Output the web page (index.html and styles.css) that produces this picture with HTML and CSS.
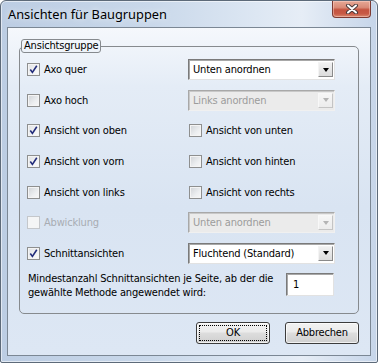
FILE: index.html
```html
<!DOCTYPE html>
<html>
<head>
<meta charset="utf-8">
<link rel="stylesheet" href="styles.css">
</head>
<body>

<div class="window">
    <div class="titlebar">
        <span class="title">Ansichten für Baugruppen</span>
        <div class="close">
            <svg width="14" height="10" viewBox="0 0 14 10">
                <path d="M3 1.5 L11 8.5 M11 1.5 L3 8.5" stroke="#4a3a3a" stroke-width="4" stroke-linecap="round"/>
                <path d="M3 1.5 L11 8.5 M11 1.5 L3 8.5" stroke="#ffffff" stroke-width="2" stroke-linecap="round"/>
            </svg>
        </div>
    </div>

    <div class="client">
        <fieldset class="group">
            <legend>Ansichtsgruppe</legend>

            <div class="grid">
                <div class="check"><span class="box on"></span>Axo quer</div>
                <div class="combo"><span class="value">Unten anordnen</span><span class="arrow"></span></div>

                <div class="check"><span class="box"></span>Axo hoch</div>
                <div class="combo disabled"><span class="value">Links anordnen</span><span class="arrow"></span></div>

                <div class="check"><span class="box on"></span>Ansicht von oben</div>
                <div class="check right"><span class="box"></span>Ansicht von unten</div>

                <div class="check"><span class="box on"></span>Ansicht von vorn</div>
                <div class="check right"><span class="box"></span>Ansicht von hinten</div>

                <div class="check"><span class="box"></span>Ansicht von links</div>
                <div class="check right"><span class="box"></span>Ansicht von rechts</div>

                <div class="check disabled"><span class="box"></span>Abwicklung</div>
                <div class="combo disabled"><span class="value">Unten anordnen</span><span class="arrow"></span></div>

                <div class="check"><span class="box on"></span>Schnittansichten</div>
                <div class="combo"><span class="value">Fluchtend (Standard)</span><span class="arrow"></span></div>
            </div>

            <div class="minrow">
                <p>Mindestanzahl Schnittansichten je Seite, ab der die<br>gewählte Methode angewendet wird:</p>
                <div class="field">1</div>
            </div>
        </fieldset>

        <div class="buttons">
            <div class="btn default"><span>OK</span></div>
            <div class="btn"><span>Abbrechen</span></div>
        </div>
    </div>
</div>

</body>
</html>
```

FILE: styles.css
```css
body {
    margin: 0;
    padding: 0;
    background: #ffffff;
}

.window {
    width: 378px;
    height: 363px;
    box-sizing: border-box;
    border: 1px solid #5d6a79;
    border-radius: 6px 6px 2px 2px;
    background: linear-gradient(to right, #bccde3 0%, #c9d8ea 40%, #dde7f3 68%, #e6edf6 80%, #c6d5e9 100%);
    box-shadow: inset 0 0 0 1px rgba(255, 255, 255, 0.55);
    display: flex;
    flex-direction: column;
    font-family: "DejaVu Sans Condensed", "DejaVu Sans", sans-serif;
    font-size: 11px;
    letter-spacing: -0.18px;
    color: #000000;
}

.titlebar {
    height: 25px;
    display: flex;
    align-items: center;
}

.title {
    padding-left: 7px;
    font-family: "Noto Sans", "Open Sans", sans-serif;
    font-size: 12.8px;
    letter-spacing: 0;
    color: #000000;
    text-shadow: 0 0 6px rgba(255, 255, 255, 0.9);
}

.close {
    margin-left: auto;
    margin-right: 6px;
    align-self: flex-start;
    width: 39px;
    height: 17px;
    box-sizing: border-box;
    border: 1px solid #7d3a32;
    border-top: none;
    border-radius: 0 0 4px 4px;
    background: linear-gradient(#e6a896 0%, #d98b78 40%, #c4533f 55%, #c85a45 80%, #d98a70 100%);
    box-shadow: inset 0 0 0 1px rgba(255, 220, 210, 0.45);
    display: flex;
    align-items: center;
    justify-content: center;
}

.client {
    margin: 1px 6px 0 6px;
    height: 329px;
    box-sizing: border-box;
    border: 1px solid #7b8794;
    background: linear-gradient(#f5f8fc 0%, #e4ecf6 18%, #d9e4f2 55%, #dde7f4 100%);
    display: flex;
    flex-direction: column;
}

.group {
    margin: 11px 11px 0 11px;
    padding: 6px 24px 13px 7px;
    border: 1px solid #868a8e;
    border-radius: 5px;
    min-width: 0;
}

.group legend {
    margin-left: -6px;
    padding: 0 2px 0 2px;
    height: 14px;
    box-sizing: border-box;
    line-height: 12px;
    border: 1px solid #868a8e;
    border-radius: 3px;
}

.grid {
    display: grid;
    grid-template-columns: 161px 147px;
    grid-auto-rows: 21px;
    row-gap: 9.67px;
}

.check {
    display: flex;
    align-items: center;
    white-space: nowrap;
}

.check.right {
    padding-left: 1px;
}

.check.disabled {
    color: #a8acb2;
}

.box {
    width: 13px;
    height: 13px;
    box-sizing: border-box;
    margin-right: 4px;
    border: 1px solid #8e8f8f;
    background: linear-gradient(135deg, #cfd2d6 0%, #eceef0 60%, #f8f8f8 100%);
    box-shadow: inset 0 0 0 1px #f4f4f4;
    flex: none;
}

.box.on {
    background-color: #f4f4f4;
    background-image: url("data:image/svg+xml,%3Csvg xmlns='http://www.w3.org/2000/svg' width='11' height='11'%3E%3Cpath d='M2.3 5.6 L4.4 8.4 L8.8 1.8' fill='none' stroke='%23222c7a' stroke-width='1.6'/%3E%3C/svg%3E"), linear-gradient(135deg, #dfe1e4 0%, #f2f3f4 60%, #fbfbfb 100%);
    background-repeat: no-repeat;
    background-position: center, 0 0;
}

.check.disabled .box {
    border-color: #c4c7cb;
    background: #f4f5f6;
    box-shadow: none;
}

.combo {
    position: relative;
    display: flex;
    align-items: center;
    box-sizing: border-box;
    height: 21px;
    border: 1px solid;
    border-color: #7a7a7a #e2e2e2 #e2e2e2 #7a7a7a;
    box-shadow: inset 1px 1px 0 #a8a8a8;
    background: #ffffff;
}

.combo .value {
    padding-left: 4px;
    flex: 1;
}

.combo .arrow {
    width: 15px;
    height: 15px;
    margin-right: 1px;
    box-sizing: border-box;
    border: 1px solid;
    border-color: #f4f4f4 #8a8a8a #8a8a8a #f4f4f4;
    background: linear-gradient(#f1f1f1, #dcdcdc);
    display: flex;
    align-items: center;
    justify-content: center;
}

.combo .arrow::after {
    content: "";
    border-left: 3.5px solid transparent;
    border-right: 3.5px solid transparent;
    border-top: 4px solid #000000;
}

.combo.disabled {
    background: #ebebeb;
    color: #9c9c9c;
    border-color: #a8a8a8 #f0f0f0 #f0f0f0 #a8a8a8;
    box-shadow: inset 1px 1px 0 #c8c8c8;
}

.combo.disabled .arrow {
    border-color: #f8f8f8 #c4c4c4 #c4c4c4 #f8f8f8;
    background: linear-gradient(#f6f6f6, #ececec);
}

.combo.disabled .arrow::after {
    border-top-color: #b4b4b4;
}

.minrow {
    margin-top: 8px;
    display: flex;
    justify-content: space-between;
    align-items: flex-start;
}

.minrow p {
    margin: 0;
    padding-left: 1px;
    line-height: 14px;
}

.field {
    margin-top: 1px;
    width: 48px;
    height: 23px;
    box-sizing: border-box;
    border: 1px solid;
    border-color: #7a7a7a #e2e2e2 #e2e2e2 #7a7a7a;
    box-shadow: inset 1px 1px 0 #a8a8a8;
    background: #ffffff;
    padding: 4px 0 0 6px;
}

.buttons {
    margin: 8px 11px 0 0;
    display: flex;
    justify-content: flex-end;
    gap: 15px;
}

.btn {
    width: 74px;
    height: 22px;
    box-sizing: border-box;
    border: 1px solid #3c3c3c;
    border-radius: 3px;
    background: linear-gradient(#f2f2f2 0%, #ebebeb 45%, #dddddd 50%, #cfcfcf 100%);
    box-shadow: inset 0 0 0 1px rgba(255, 255, 255, 0.7);
    display: flex;
    align-items: center;
    justify-content: center;
    padding: 2px;
}

.btn span {
    flex: 1;
    align-self: stretch;
    display: flex;
    align-items: center;
    justify-content: center;
    border: 1px dotted transparent;
}

.btn.default span {
    border-color: #000000;
}
```
